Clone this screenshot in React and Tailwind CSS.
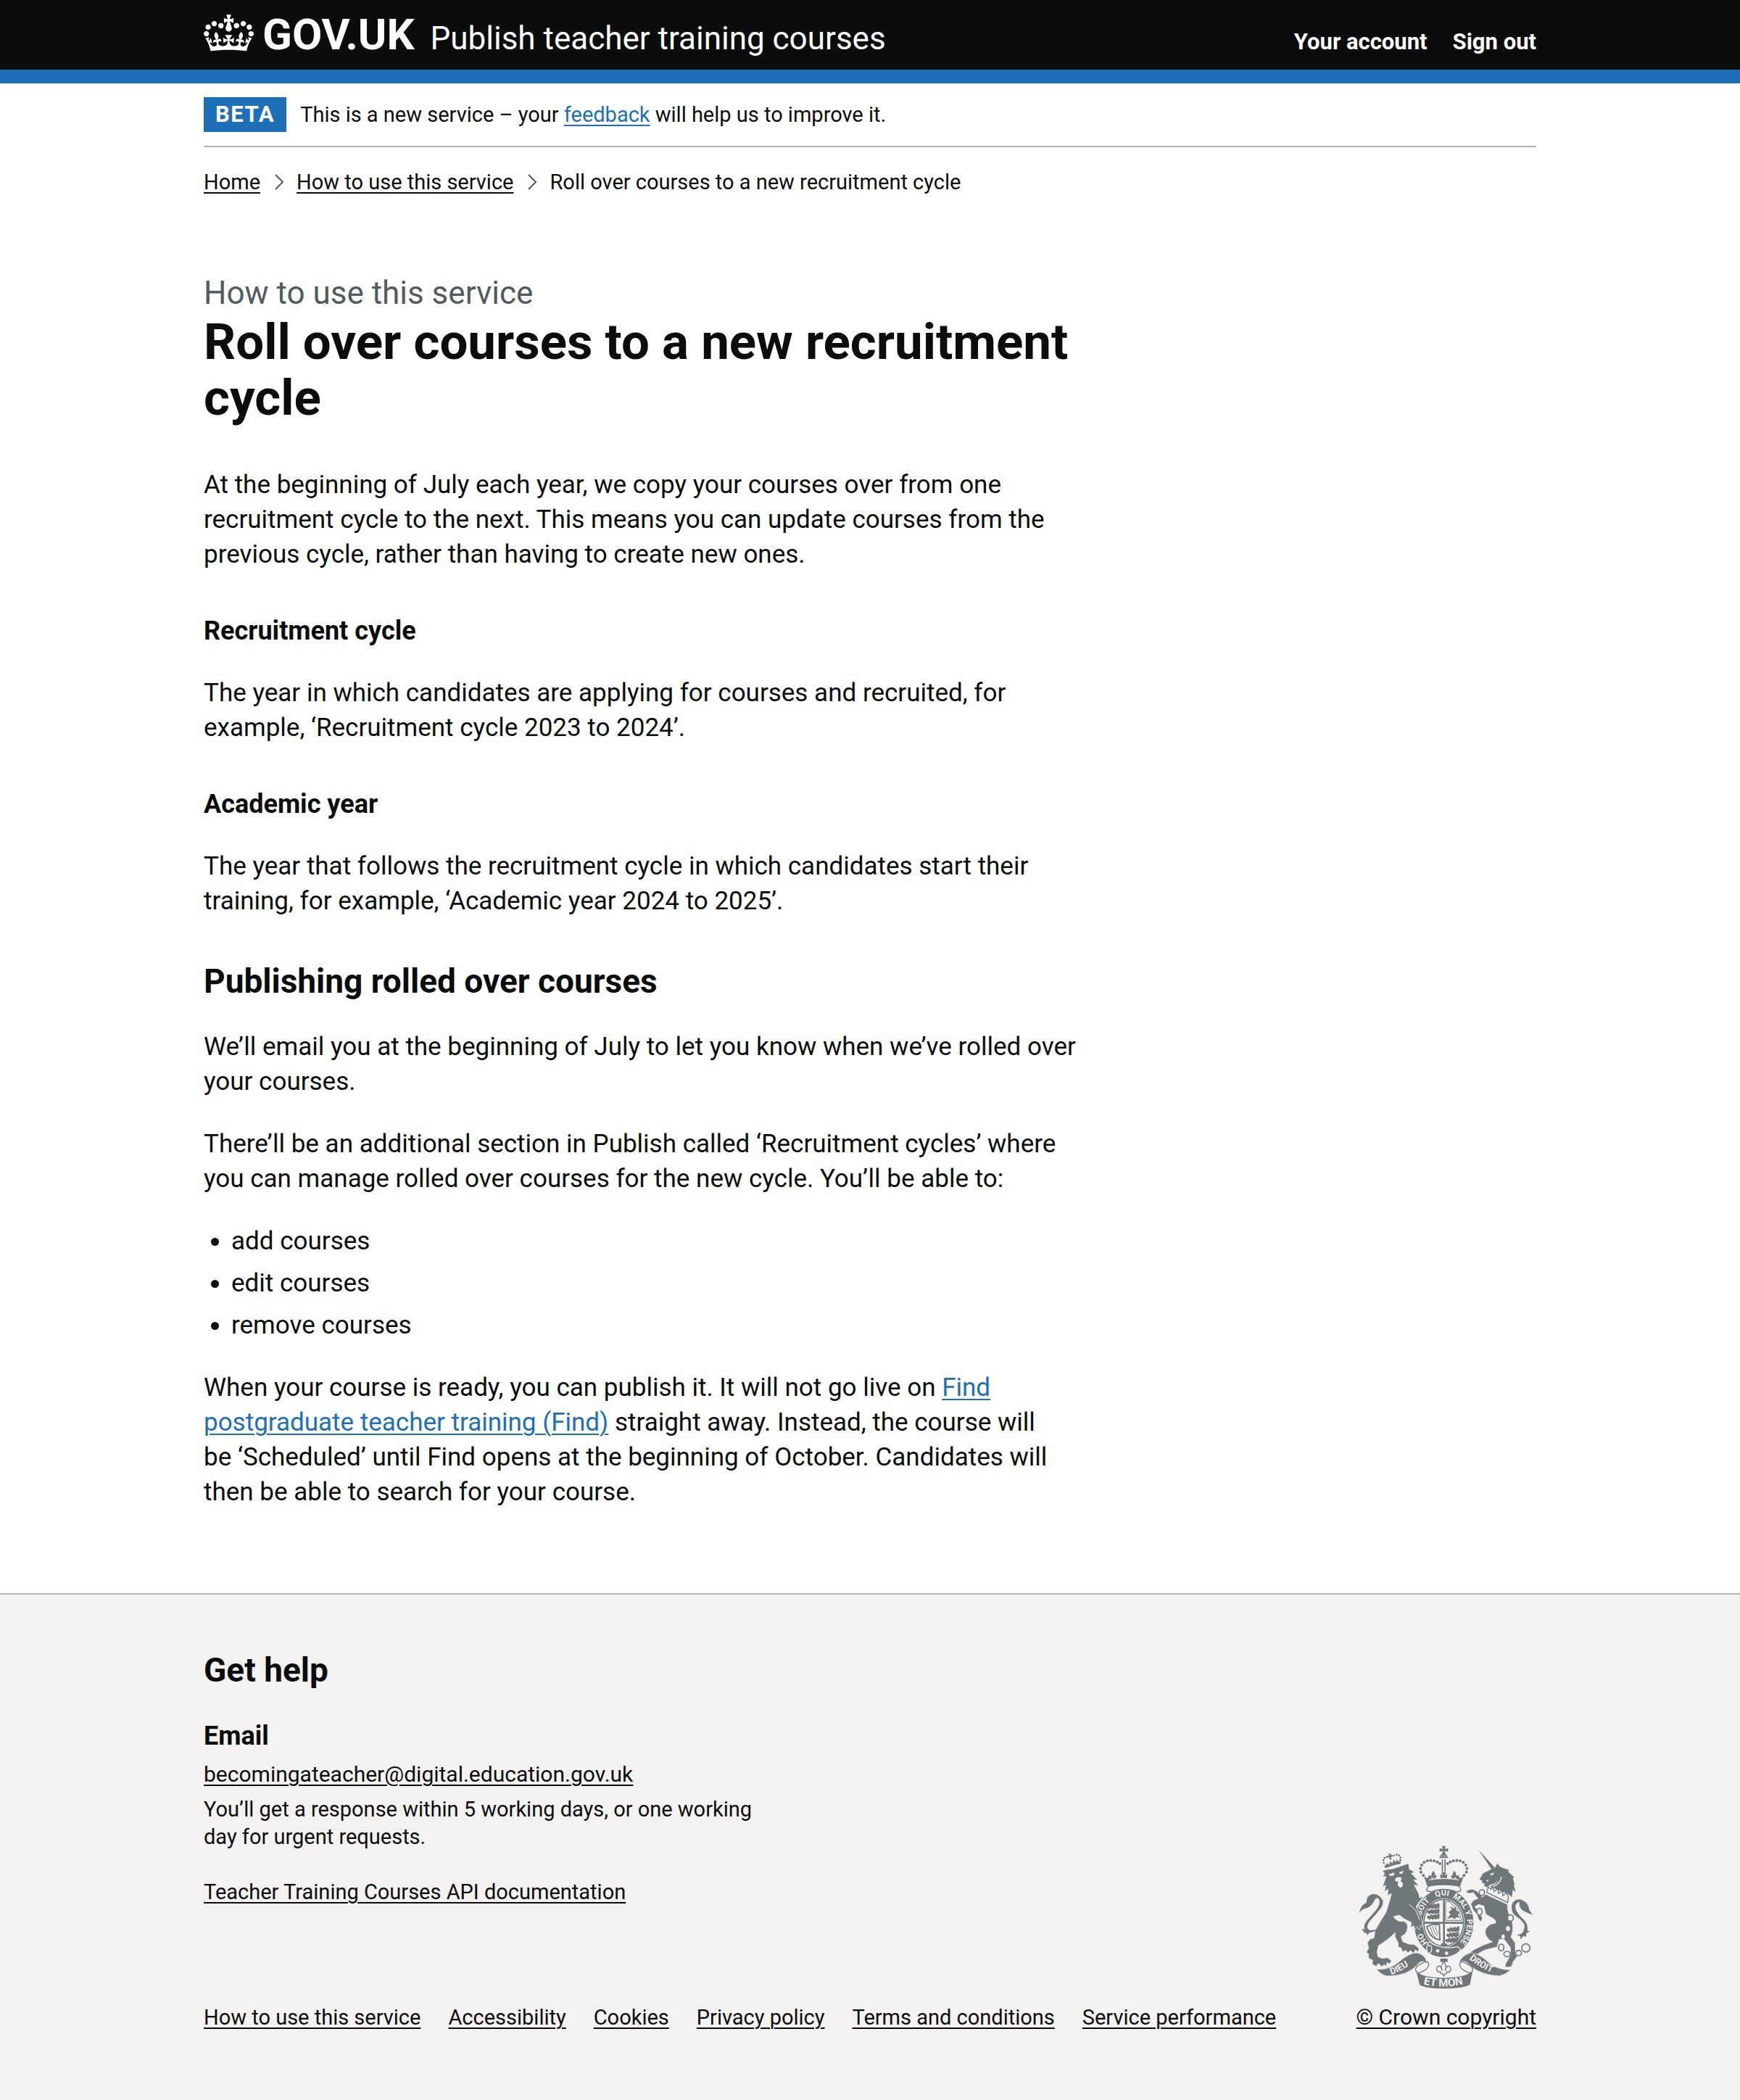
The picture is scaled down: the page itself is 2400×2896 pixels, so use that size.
import React from "react";

function Crown({ className }) {
  return (
    <svg className={className} viewBox="0 0 132 97" fill="currentColor" aria-hidden="true">
      <path d="M25 30.2c3.5 1.5 7.7-.2 9.1-3.7 1.5-3.6-.2-7.8-3.9-9.2-3.6-1.4-7.6.3-9.1 3.9-1.4 3.5.3 7.5 3.9 9zM9 39.5c3.6 1.5 7.8-.2 9.2-3.7 1.5-3.6-.2-7.8-3.9-9.1-3.6-1.5-7.6.2-9.1 3.8-1.4 3.5.3 7.5 3.8 9zM4.4 57.2c3.5 1.5 7.7-.2 9.1-3.8 1.5-3.6-.2-7.7-3.9-9.1-3.5-1.5-7.6.3-9.1 3.8-1.4 3.5.3 7.6 3.9 9.1zm38.3-21.4c3.5 1.5 7.7-.2 9.1-3.8 1.5-3.6-.2-7.7-3.9-9.1-3.6-1.5-7.6.3-9.1 3.8-1.3 3.6.4 7.7 3.9 9.1zm64.4-5.6c-3.6 1.5-7.8-.2-9.1-3.7-1.5-3.6.2-7.8 3.8-9.2 3.6-1.4 7.7.3 9.2 3.9 1.3 3.5-.4 7.5-3.9 9zm15.9 9.3c-3.6 1.5-7.7-.2-9.1-3.7-1.5-3.6.2-7.8 3.7-9.1 3.6-1.5 7.7.2 9.2 3.8 1.5 3.5-.3 7.5-3.8 9zm4.7 17.7c-3.6 1.5-7.8-.2-9.2-3.8-1.5-3.6.2-7.7 3.9-9.1 3.6-1.5 7.7.3 9.2 3.8 1.3 3.5-.4 7.6-3.9 9.1zM89.3 35.8c-3.6 1.5-7.8-.2-9.2-3.8-1.4-3.6.2-7.7 3.9-9.1 3.6-1.5 7.7.3 9.2 3.8 1.4 3.6-.3 7.7-3.9 9.1zM69.7 17.7l8.9 4.7V9.3l-8.9 2.8c-.2-.3-.5-.6-.9-.9L72.4 0H59.6l3.5 11.2c-.3.3-.6.5-.9.9l-8.8-2.8v13.1l8.8-4.7c.3.3.6.7.9.9l-5 15.4v.1c-.2.8-.4 1.6-.4 2.4 0 4.1 3.1 7.5 7 8.1h.2c.3 0 .7.1 1 .1.4 0 .7 0 1-.1h.2c4-.6 7.1-4.1 7.1-8.1 0-.8-.1-1.7-.4-2.4V34l-5.1-15.4c.4-.2.7-.6 1-.9zM66 92.8c16.9 0 32.8 1.1 47.1 3.2 4-16.9 8.9-26.7 14-33.5l-9.6-3.4c1 4.9 1.1 7.2 0 10.2-1.5-1.4-3-4.3-4.2-8.7L108.6 76c2.8-2 5-3.2 7.5-3.3-4.4 9.4-10 11.9-13.6 11.2-4.3-.8-6.3-4.6-5.6-7.9 1-4.7 5.7-5.9 8-.5 4.3-8.7-3-11.4-7.6-8.8 7.1-7.2 7.9-13.5 2.1-21.1-8 6.1-8.1 12.3-4.5 20.8-4.7-5.4-12.1-2.5-9.5 6.2 3.4-5.2 7.9-2 7.2 3.1-.6 4.3-6.4 7.8-13.5 7.2-10.3-.9-10.9-8-11.2-13.8 2.5-.5 7.1 1.8 11 7.3L80.2 60c-4.1 4.4-8 5.3-12.3 5.4 1.4-4.4 8-11.6 8-11.6H55.5s6.4 7.2 7.9 11.6c-4.2-.1-8-1-12.3-5.4l1.4 16.4c3.9-5.5 8.5-7.7 10.9-7.3-.3 5.8-.9 12.8-11.1 13.8-7.2.6-12.9-2.9-13.5-7.2-.7-5 3.8-8.3 7.1-3.1 2.7-8.7-4.6-11.6-9.4-6.2 3.7-8.5 3.6-14.7-4.6-20.8-5.8 7.6-5 13.9 2.2 21.1-4.7-2.6-11.9.1-7.7 8.8 2.3-5.5 7.1-4.2 8.1.5.7 3.3-1.3 7.1-5.7 7.9-3.5.7-9-1.8-13.5-11.2 2.5.1 4.7 1.3 7.5 3.3l-4.7-15.4c-1.2 4.4-2.7 7.2-4.3 8.7-1.1-3-.9-5.3 0-10.2l-9.5 3.4c5 6.9 9.9 16.7 14 33.5 14.8-2.1 30.8-3.2 47.7-3.2z" />
    </svg>
  );
}

const crownDots = [
  [338, 172], [328, 158], [326, 143], [331, 129], [341, 118], [354, 112], [368, 110], [382, 112], [395, 116], [406, 123],
  [506, 172], [516, 158], [518, 143], [513, 129], [503, 118], [490, 112], [476, 110], [462, 112], [449, 116], [438, 123],
];

const lionCrownDots = [
  [174, 120], [172, 109], [177, 100], [186, 96], [216, 90], [227, 86], [237, 89], [243, 98], [243, 108],
];

const motto = [
  ["HO", "15%"],
  ["SOIT", "35%"],
  ["QUI", "49%"],
  ["MAL", "61%"],
  ["Y", "69%"],
  ["PENSE", "80.5%"],
];

const quarterLions = [
  [382, 296], [382, 318], [382, 340], [464, 392], [462, 414], [458, 436],
];

function RoyalArms({ className }) {
  const ink = "#6f777b";
  const paper = "#f3f2f1";
  return (
    <svg className={className} viewBox="70 48 723 594" fill={ink} stroke="none" aria-hidden="true">
      <defs>
        <path id="garter" d="M422 480A96 112 0 0 1 422 256A96 112 0 0 1 422 480" />
        <path id="ribbon-left" d="M205 582Q252 568 306 523" />
        <path id="ribbon-mid" d="M338 622Q422 642 510 620" />
        <path id="ribbon-right" d="M527 517Q580 562 650 584" />
      </defs>

      {/* Garter and quartered shield */}
      <ellipse cx="422" cy="368" rx="123" ry="139" />
      <ellipse cx="422" cy="368" rx="87" ry="102" fill={paper} />
      <ellipse cx="422" cy="368" rx="82" ry="97" fill="none" stroke={ink} strokeWidth="5" />
      <path d="M419 272h8v92h78v8h-78v94h-8v-94h-80v-8h80z" />
      <path d="M430 280h14l38 34 14 44h-66z" fill="none" stroke={ink} strokeWidth="3" />
      <path d="M436 352l14-20-8-8 14-12-10-12 18 8 8-6 2 14 14 10-8 8 8 14-14-4-8 10-8-8z" />
      {quarterLions.map(([x, y]) => (
        <path
          key={`${x}-${y}`}
          transform={`translate(${x} ${y})`}
          d="M-30 7l4-9 8 2 4-7 8 4 10-4 8 3 4-6 8 4-3 8 6 3-8 3 2 6-8-3-6 4-6-5-8 6-4-6-8 5z"
        />
      ))}
      <path d="M352 384q22-14 52-8l2 62q-34-4-46-34z" fill="none" stroke={ink} strokeWidth="6" />
      <path d="M366 384q6 30 24 48M376 382q4 24 20 42M387 380q2 20 12 34" fill="none" stroke={ink} strokeWidth="3" />
      <path d="M406 466l8-14h18l10 14z" />
      <g fill={paper} fontFamily="Roboto, sans-serif" fontWeight="700" fontSize="33" textAnchor="middle">
        {motto.map(([word, at]) => (
          <text key={word}>
            <textPath href="#garter" startOffset={at}>{word}</textPath>
          </text>
        ))}
      </g>
      <path d="M356 452q14-10 20 4 50 24 104 10l14 14q-28 32-74 32-38-2-58-16-12-4-10-22z" stroke={paper} strokeWidth="4" />
      <circle cx="397" cy="484" r="7" fill={paper} />
      <circle cx="434" cy="494" r="7" fill={paper} />
      <path d="M358 462q14-4 14 12t-10 20" fill="none" stroke={paper} strokeWidth="4" />

      {/* Imperial crown */}
      <path d="M340 176l14 8 8-14 12 16 8-8 16 10 24-14 24 14 16-10 8 8 12-16 8 14 14-8-14 40H354z" />
      <path d="M379 152l8 14-3 6h8v8h-26v-8h8l-3-6zM466 152l8 14-3 6h8v8h-26v-8h8l-3-6zM412 158h20l-6 14 10-6v16h-28v-16l10 6z" />
      <path d="M362 190q60-12 122 0" fill="none" stroke={paper} strokeWidth="4" />
      <path d="M352 236q-2-20 18-22 52-8 106 0 18 2 16 22l-16 4q-52-22-106 0z" fill={paper} stroke={ink} strokeWidth="4" />
      {crownDots.map(([x, y]) => (
        <circle key={`${x}-${y}`} cx={x} cy={y} r="6" />
      ))}
      <path d="M414 106h5v50h-5zM425 106h5v50h-5z" />
      <path d="M404 100q2-16 18-18 16 2 18 18z" />
      <path d="M404 92h36" stroke={paper} strokeWidth="2" />
      <path d="M415 50h15l-4 13 14-4v15l-14-4 4 14h-15l4-14-14 4V59l14 4z" />

      {/* Lion */}
      <path d="M168 275q-10-26-38-26-28 4-28 36-22 8-30 42 10-14 22-18 28-2 44-38 8-12 16-2 8 18-10 44-22 26-40 46-14 18-10 36l-12-2 14 18 6-2 4 10 8-10 30-8 12-14q-28 16-44 10-14-10 2-34 30-32 48-56 14-20 6-40z" />
      <path
        stroke={paper}
        strokeWidth="2"
        d="M168 154L184 148 214 144 276 122 280 146 302 158 288 163 314 192 297 190 318 214 300 212 318 246 322 264 338 258 308 300 330 350 334 386 326 378 322 398 312 384 304 398 298 380 286 388 288 366Q262 356 238 336L214 342Q228 366 258 362 274 370 272 390 270 414 246 424L252 446 278 456 300 458 320 474 316 488 304 480 298 494 284 482 276 492 264 482 252 488 246 472 234 468 234 452 220 424 222 408Q190 440 152 462L146 488 150 508 168 515 190 512 206 526 198 538 188 532 184 548 176 540 166 550 152 536 142 548 126 538 128 522 110 514 112 498 102 490 112 472 106 452 116 436 134 430 138 400Q160 360 184 324L200 270 206 246 190 256 192 228 177 240 182 212 169 220 184 176 170 178 178 164z"
      />
      <path d="M194 168l24-8-2 12-16 2zM238 158l18-5-5 11-12 2zM222 184q14-10 26-2l-4 12 8 10q4 14-8 18-12-2-12-14l2-12-12 2z" fill={paper} />
      <path d="M278 290l28 26 16 40" fill="none" stroke={paper} strokeWidth="3" />
      <path d="M180 142q32-14 64-18l-1-18-8 10-6-12-6 14-8-12-6 16-9-10-4 16-9-8-4 12-7-6z" />
      <path d="M194 82l7-2 2 7 7-1 1 7-7 2 2 10-7 2-2-10-7 1-1-7 7-2z" />
      {lionCrownDots.map(([x, y]) => (
        <circle key={`${x}-${y}`} cx={x} cy={y} r="4" />
      ))}

      {/* Unicorn */}
      <path d="M566 66l66 72-12 8z" />
      <path d="M622 144l14-6 8-16 10 14 38 14-4 6 26 24-6 4 8 26-4 2 8 28-12-8-4 30-16-14-76-30q30-8 34-30-4 16-30 22-10 6-16 12l-12-10 4-8-12 0 2-10-12-6 14-24z" />
      <path d="M614 166l16-6-2 8-12 4zM596 192l12-2-4 8z" fill={paper} />
      <path d="M660 178q0 24-34 42" fill="none" stroke={paper} strokeWidth="4" />
      <path d="M606 220l12 10 6-12 6 20 18-12 0 20 18-10 0 20 16-12 8 18-4 22-86-42z" fill={paper} stroke={ink} strokeWidth="4" />
      <path
        stroke={paper}
        strokeWidth="2"
        d="M596 250l90 42q-2 30 12 50 14 30 8 66l-6 18 18 26 0 44 8 12-16 20-8 22-26 2 2-14 20-36 0-32-26-34-20 0-10 32-50 12-32 18-8-2-6 14-22 0 4-16 18-14 36-18 42-16-12-6q-24-24-16-46 12-22 40-24 6-6-6-18l-34-20-8-34-22-6-16 10 14 12 6 18 12 14-4 18-12-10-6-22-16-16-10-26 12-16 18-6-20-26-14 4-14-2 2-10 22-6 20 10 22 24z"
      />
      <path d="M706 322q-10-32 10-46 22-12 40 4 16 8 20 34l14 22q-24-10-40-18-20-16-14-36-24 4-14 36 14 24 34 40 16 20 12 42l10 4-14 6-2 16-10-4-12 14-2-14-14-4 18-4q16-12 14-38-12-20-28-30-18-12-22-24z" />
      <g fill={paper} stroke={ink} strokeWidth="5">
        <ellipse cx="580" cy="243" rx="11" ry="12" />
        <ellipse cx="570" cy="322" rx="11" ry="14" />
        <ellipse cx="698" cy="348" rx="12" ry="13" />
        <ellipse cx="660" cy="470" rx="11" ry="14" />
        <ellipse cx="684" cy="497" rx="13" ry="11" />
        <ellipse cx="732" cy="493" rx="12" ry="11" />
        <circle cx="762" cy="472" r="17" />
      </g>
      <ellipse cx="688" cy="392" rx="8" ry="10" fill={paper} />
      <ellipse cx="668" cy="425" rx="7" ry="9" fill={paper} />

      {/* Ribbon */}
      <path d="M144 560q52 4 90-28 46-40 76-40 34 6 42 38-26-6-34 6-42 52-130 52-24-4-44-28z" stroke={paper} strokeWidth="2" />
      <path d="M700 562q-50 2-88-26-44-42-76-44-34 6-50 38 26-8 36 6 46 48 130 52 26-6 48-26z" stroke={paper} strokeWidth="2" />
      <path d="M328 538q32-20 32 6-8 24-46 32-22-22 14-38zM518 538q-30-20-30 6 8 24 46 32 22-22-16-38z" fill={paper} stroke={ink} strokeWidth="4" />
      <path d="M308 568q22 26 114 28 90-2 120-28l-12 56q-30 16-108 16t-100-16z" />
      <g fill={paper} fontFamily="Roboto, sans-serif" fontWeight="700">
        <text fontSize="38"><textPath href="#ribbon-left">DIEU</textPath></text>
        <text fontSize="45"><textPath href="#ribbon-mid">ET MON</textPath></text>
        <text fontSize="38"><textPath href="#ribbon-right">DROIT</textPath></text>
      </g>

      {/* Fleur-de-lis */}
      <path d="M408 516h30v14h-30z" />
      <path
        d="M422 530q16 18 6 36 2-22 18-18 12 10-2 24l-8-2-2 8-6 0-6 10-6-10-6 0-2-8-8 2q-14-14-2-24 16-4 18 18-10-18 6-36z"
        fill={paper}
        stroke={ink}
        strokeWidth="4"
      />
    </svg>
  );
}

function Chevron() {
  return (
    <svg className="ml-5 mr-[18px] h-[22px] w-3 shrink-0 text-[#505a5f]" viewBox="0 0 12 22" fill="none" stroke="currentColor" strokeWidth="2" aria-hidden="true">
      <path d="M1 1l10 10L1 21" />
    </svg>
  );
}

function Container({ className = "", children }) {
  return <div className={`mx-auto w-full max-w-[1838px] ${className}`}>{children}</div>;
}

const dark = "underline decoration-2 underline-offset-4 text-[#0b0c0c]";
const blue = "underline decoration-2 underline-offset-4 text-[#1d70b8]";

const footerLinks = [
  "How to use this service",
  "Accessibility",
  "Cookies",
  "Privacy policy",
  "Terms and conditions",
  "Service performance",
];

export default function App() {
  return (
    <div className="flex min-h-screen flex-col bg-white font-[Roboto,sans-serif] text-[35px] leading-[48px] text-[#0b0c0c]">
      <header className="border-b-[19px] border-[#1d70b8] bg-[#0b0c0c] text-white">
        <Container className="flex min-h-24 items-baseline pt-[18px]">
          <a href="#" className="flex items-start gap-3">
            <Crown className="mt-0.5 h-[51px] w-[69px]" />
            <span className="self-baseline text-[60px] leading-[60px] font-bold">GOV.UK</span>
          </a>
          <a href="#" className="ml-[22px] text-[44px] leading-[57px]">Publish teacher training courses</a>
          <nav className="ml-auto flex gap-[35px] text-[31px] leading-[38px] font-bold">
            <a href="#">Your account</a>
            <a href="#">Sign out</a>
          </nav>
        </Container>
      </header>

      <Container>
        <div className="flex items-center gap-[19px] border-b-2 border-[#b1b4b6] py-[19px] text-[29px]">
          <strong className="bg-[#1d70b8] px-4 text-[31px] font-bold tracking-wider text-white">BETA</strong>
          <p>
            This is a new service – your <a href="#" className={blue}>feedback</a> will help us to improve it.
          </p>
        </div>
        <nav aria-label="Breadcrumb" className="mt-[29px] text-[29px] leading-[38px]">
          <ol className="flex items-center">
            <li><a href="#" className={dark}>Home</a></li>
            <li className="flex items-center"><Chevron /><a href="#" className={dark}>How to use this service</a></li>
            <li className="flex items-center"><Chevron />Roll over courses to a new recruitment cycle</li>
          </ol>
        </nav>
      </Container>

      <Container className="grow pt-[106px] pb-[110px]">
        <main className="max-w-[1206px]">
          <span className="block text-[44px] leading-[57px] text-[#505a5f]">How to use this service</span>
          <h1 className="mb-[58px] text-[69px] leading-[77px] font-bold">
            Roll over courses to a new recruitment cycle
          </h1>
          <p>
            At the beginning of July each year, we copy your courses over from one recruitment cycle to the next. This
            means you can update courses from the previous cycle, rather than having to create new ones.
          </p>
          <h3 className="mt-[57px] mb-[38px] text-[36px] font-bold">Recruitment cycle</h3>
          <p>
            The year in which candidates are applying for courses and recruited, for example, ‘Recruitment cycle 2023
            to 2024’.
          </p>
          <h3 className="mt-[57px] mb-[38px] text-[36px] font-bold">Academic year</h3>
          <p>
            The year that follows the recruitment cycle in which candidates start their training, for example,
            ‘Academic year 2024 to 2025’.
          </p>
          <h2 className="mt-[58px] mb-[38px] text-[46px] leading-[57px] font-bold">Publishing rolled over courses</h2>
          <p className="mb-[38px]">
            We’ll email you at the beginning of July to let you know when we’ve rolled over your courses.
          </p>
          <p className="mb-[38px]">
            There’ll be an additional section in Publish called ‘Recruitment cycles’ where you can manage rolled over
            courses for the new cycle. You’ll be able to:
          </p>
          <ul className="mb-[38px] list-disc space-y-[10px] pl-[38px]">
            <li>add courses</li>
            <li>edit courses</li>
            <li>remove courses</li>
          </ul>
          <p>
            When your course is ready, you can publish it. It will not go live on{" "}
            <a href="#" className={blue}>Find postgraduate teacher training (Find)</a> straight away. Instead, the
            course will be{"\u00a0"}‘Scheduled’ until Find opens at the beginning of October. Candidates will then be able to
            search for your course.
          </p>
        </main>
      </Container>

      <footer className="border-t-2 border-[#b1b4b6] bg-[#f3f2f1] pt-[76px] pb-[95px]">
        <Container className="flex items-end justify-between text-[29px] leading-[38px]">
          <div>
            <h2 className="mb-[38px] text-[46px] leading-[57px] font-bold">Get help</h2>
            <h3 className="mb-[10px] text-[36px] leading-[48px] font-bold">Email</h3>
            <ul className="mb-[38px] max-w-[800px] space-y-[10px]">
              <li><a href="#" className={`text-[30px] ${dark}`}>becomingateacher@digital.education.gov.uk</a></li>
              <li>You’ll get a response within 5 working days, or one working day for urgent requests.</li>
            </ul>
            <p className="mb-[135px]"><a href="#" className={dark}>Teacher Training Courses API documentation</a></p>
            <ul className="flex flex-wrap gap-x-[38px]">
              {footerLinks.map((label) => (
                <li key={label}><a href="#" className={dark}>{label}</a></li>
              ))}
            </ul>
          </div>
          <a href="#" className={`flex shrink-0 flex-col items-center gap-5 text-[30px] ${dark}`}>
            <RoyalArms className="h-[198px] w-[241px]" />
            <span>© Crown copyright</span>
          </a>
        </Container>
      </footer>
    </div>
  );
}
